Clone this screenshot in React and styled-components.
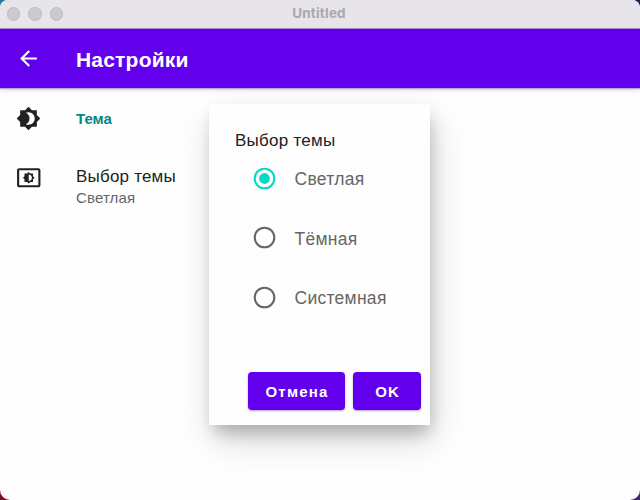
import React from 'react';
import styled, { createGlobalStyle } from 'styled-components';

const GlobalStyle = createGlobalStyle`
  * { box-sizing: border-box; }
  body { margin: 0; overflow: hidden; font-family: "Liberation Sans", Arial, sans-serif; }
`;

const Desktop = styled.div`
  width: 640px;
  height: 500px;
  background: linear-gradient(to right, #2a7ba4 0 320px, #221f52 320px) top / 100% 50% no-repeat,
    linear-gradient(to right, #7d0a28 0 320px, #3f2675 320px) bottom / 100% 50% no-repeat;
`;

const Window = styled.div`
  height: 500px;
  display: flex;
  flex-direction: column;
  border-radius: 8px 8px 10px 10px;
  overflow: hidden;
  background: #fefefe;
`;

const TitleBar = styled.div`
  height: 28px;
  flex: none;
  display: grid;
  grid-template-columns: 64px 1fr 66px;
  align-items: center;
  background: #e7e4ea;
`;

const Lights = styled.div`
  display: flex;
  gap: 8px;
  padding-left: 7px;
`;

const Light = styled.i`
  width: 13.4px;
  height: 13.4px;
  flex: none;
  border-radius: 50%;
  background: #cbcacc;
  border: 1px solid #bdbcbe;
`;

const WindowTitle = styled.div`
  text-align: center;
  font: 700 13.5px/26px Inter, sans-serif;
  letter-spacing: 0.2px;
  color: #aaa8ab;
  padding-bottom: 2px;
`;

const AppBar = styled.header`
  position: relative;
  height: 60px;
  flex: none;
  display: grid;
  grid-template-columns: 60px 1fr;
  align-items: center;
  padding-left: 16px;
  background: #6200ee;
  border-top: 1px solid #a58bd0;
  box-shadow: 0 1px 1px #b8a5d8, 0 2px 4px rgba(0, 0, 0, 0.16);
`;

const Text = styled.div`
  white-space: nowrap;
  font-size: ${(p) => p.$size}px;
  line-height: ${(p) => p.$line || 20}px;
  font-weight: ${(p) => (p.$bold ? 700 : 400)};
  letter-spacing: ${(p) => p.$spacing || 0}px;
  padding-top: ${(p) => p.$drop || 0}px;
  color: ${(p) => p.$color};
`;

const Icon = styled.svg`
  display: block;
  width: ${(p) => p.$size}px;
  height: ${(p) => p.$size}px;
  fill: ${(p) => p.$color || '#212121'};
`;

const Content = styled.main`
  position: relative;
  flex: 1;
  padding-left: 16px;
`;

const Row = styled.div`
  display: grid;
  grid-template-columns: 60px 1fr;
  align-items: ${(p) => (p.$top ? 'start' : 'center')};
  height: 60px;
`;

const IconSlot = styled.div`
  padding-top: ${(p) => p.$offset || 0}px;
`;

const Labels = styled.div`
  padding-top: 18px;
`;

const Dialog = styled.section`
  position: absolute;
  left: 209px;
  top: 16px;
  width: 220.5px;
  height: 321px;
  display: flex;
  flex-direction: column;
  padding: 27px 8.5px 15px 26px;
  background: #fefefe;
  box-shadow: 4px 16px 34px rgba(0, 0, 0, 0.14), 2px 12px 16px -4px rgba(0, 0, 0, 0.2),
    3px 6px 16px rgba(0, 0, 0, 0.05);
`;

const Options = styled.div`
  display: flex;
  flex-direction: column;
  gap: 19.5px;
  padding: 7px 0 0 18px;
`;

const Option = styled.label`
  height: 40px;
  display: grid;
  grid-template-columns: 41.5px 1fr;
  align-items: center;
`;

const Radio = styled.svg`
  display: block;
  width: 23px;
  height: 23px;
  fill: none;
  stroke: ${(p) => (p.$checked ? '#03dac5' : '#666')};
  stroke-width: 2.1;
`;

const Dot = styled.circle`
  fill: #03dac5;
  stroke: none;
`;

const Actions = styled.div`
  margin-top: auto;
  display: flex;
  justify-content: flex-end;
  gap: 8px;
`;

const Button = styled.button`
  width: ${(p) => p.$width}px;
  height: 38px;
  padding: 1px 0 0 1px;
  border: 0;
  border-radius: 4px;
  background: #6200ee;
  color: #fff;
  font: 700 15px/20px "Liberation Sans", Arial, sans-serif;
  letter-spacing: ${(p) => p.$spacing}px;
  box-shadow: 0 1px 2px rgba(60, 20, 120, 0.4);
`;

const options = [
  { label: 'Светлая', checked: true },
  { label: 'Тёмная' },
  { label: 'Системная' },
];

export default function App() {
  return (
    <Desktop>
      <GlobalStyle />
      <Window>
        <TitleBar>
          <Lights><Light /><Light /><Light /></Lights>
          <WindowTitle>Untitled</WindowTitle>
        </TitleBar>
        <AppBar>
          <Icon $size={25} $color="#fff" viewBox="0 0 24 24">
            <path d="M20 11H7.83l5.59-5.59L12 4l-8 8 8 8 1.41-1.41L7.83 13H20v-2z" />
          </Icon>
          <Text $size={21} $line={24} $spacing={0.2} $drop={2} $bold $color="#fff">Настройки</Text>
        </AppBar>
        <Content>
          <Row>
            <Icon $size={25} viewBox="0 0 24 24">
              <path d="M20 15.31 23.31 12 20 8.69V4h-4.69L12 .69 8.69 4H4v4.69L.69 12 4 15.31V20h4.69L12 23.31 15.31 20H20v-4.69zM12 18c-.89 0-1.74-.2-2.5-.55C11.56 16.5 13 14.42 13 12s-1.44-4.5-3.5-5.45C10.26 6.2 11.11 6 12 6c3.31 0 6 2.69 6 6s-2.69 6-6 6z" />
            </Icon>
            <Text $size={15} $drop={2} $bold $color="#018786">Тема</Text>
          </Row>
          <Row $top>
            <IconSlot $offset={17}>
              <Icon $size={25.5} viewBox="0 0 24 24">
                <path d="M21 3H3c-1.1 0-2 .9-2 2v14c0 1.1.9 2 2 2h18c1.1 0 2-.9 2-2V5c0-1.1-.9-2-2-2zm0 16.01H3V4.99h18v14.02zM8 16h2.5l1.5 1.5 1.5-1.5H16v-2.5l1.5-1.5-1.5-1.5V8h-2.5L12 6.5 10.5 8H8v2.5L6.5 12 8 13.5V16zm4-7c1.66 0 3 1.34 3 3s-1.34 3-3 3V9z" />
              </Icon>
            </IconSlot>
            <Labels>
              <Text $size={17} $line={22} $spacing={0.2} $color="#212121">Выбор темы</Text>
              <Text $size={15} $spacing={0.15} $color="#666">Светлая</Text>
            </Labels>
          </Row>
          <Dialog>
            <Text $size={17} $spacing={0.25} $color="#212121">Выбор темы</Text>
            <Options>
              {options.map(({ label, checked }) => (
                <Option key={label}>
                  <Radio $checked={checked} viewBox="0 0 23 23">
                    <circle cx="11.5" cy="11.5" r="9.8" />
                    {checked && <Dot cx="11.5" cy="11.5" r="5.4" />}
                  </Radio>
                  <Text $size={17.5} $spacing={0.28} $drop={2} $color="#666">{label}</Text>
                </Option>
              ))}
            </Options>
            <Actions>
              <Button $width={97} $spacing={1.2}>Отмена</Button>
              <Button $width={68} $spacing={1}>OK</Button>
            </Actions>
          </Dialog>
        </Content>
      </Window>
    </Desktop>
  );
}
